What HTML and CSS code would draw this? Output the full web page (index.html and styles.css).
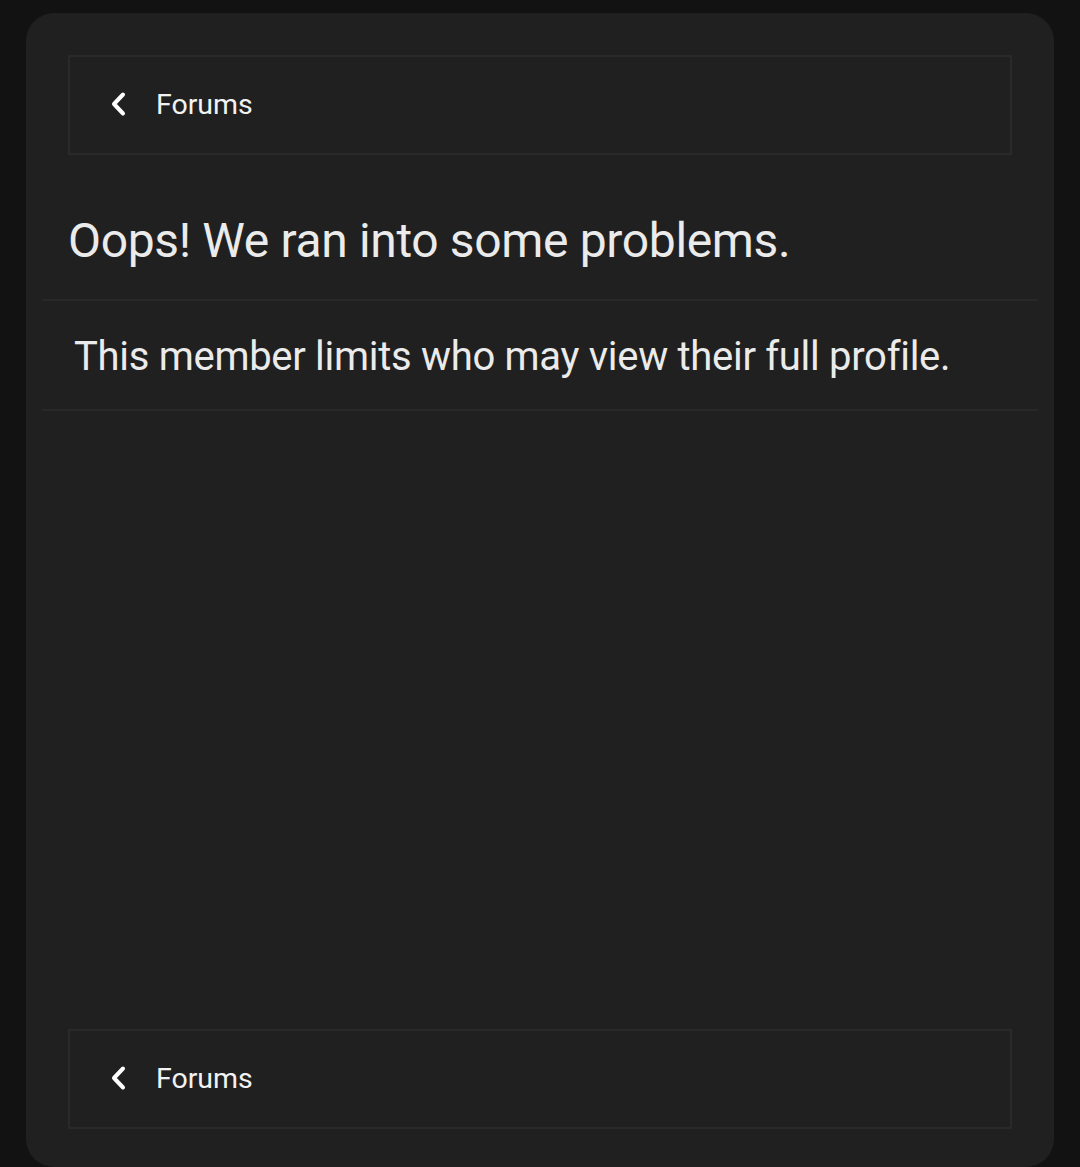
FILE: index.html
```html
<!DOCTYPE html>
<html lang="en">
<head>
<meta charset="utf-8">
<title>Oops! We ran into some problems.</title>
<link rel="stylesheet" href="styles.css">
</head>
<body>
<div class="card">
  <nav class="crumb">
    <svg class="chev" width="16" height="26" viewBox="0 0 16 26"><polyline points="13,3.5 4,13 13,22.5" fill="none" stroke="#ffffff" stroke-width="4" stroke-linecap="round" stroke-linejoin="round"/></svg>
    <span class="crumb-text">Forums</span>
  </nav>
  <h1 class="title">Oops! We ran into some problems.</h1>
  <div class="block">
    <p class="msg">This member limits who may view their full profile.</p>
  </div>
  <div class="spacer"></div>
  <nav class="crumb">
    <svg class="chev" width="16" height="26" viewBox="0 0 16 26"><polyline points="13,3.5 4,13 13,22.5" fill="none" stroke="#ffffff" stroke-width="4" stroke-linecap="round" stroke-linejoin="round"/></svg>
    <span class="crumb-text">Forums</span>
  </nav>
</div>
</body>
</html>
```

FILE: styles.css
```css
html, body {
  margin: 0;
  padding: 0;
  background: #121212;
}
body {
  padding: 13px 26px 0 26px;
  font-family: Roboto, "Liberation Sans", sans-serif;
  color: #eeeeee;
}
.card {
  background: #202020;
  border-radius: 28px;
  height: 1154px;
  box-sizing: border-box;
  padding: 42px 16px 38px 16px;
  display: flex;
  flex-direction: column;
}
.crumb {
  margin: 0 26px;
  height: 100px;
  box-sizing: border-box;
  border: 2px solid #2a2a2a;
  display: flex;
  align-items: center;
  padding-left: 40px;
}
.chev {
  display: block;
  margin-right: 30px;
  margin-top: -2px;
}
.crumb-text {
  font-size: 28.5px;
  color: #f2f2f2;
  position: relative;
  top: -1px;
}
.title {
  margin: 0;
  padding: 58px 0 30px 26px;
  font-size: 48px;
  letter-spacing: -0.35px;
  font-weight: 400;
  line-height: 56px;
  color: #ebebeb;
  border-bottom: 2px solid #282828;
}
.block {
  border-bottom: 2px solid #282828;
  padding: 28px 0 24px 32px;
}
.msg {
  margin: 0;
  font-size: 40px;
  letter-spacing: -0.3px;
  line-height: 56px;
  color: #ebebeb;
}
.spacer {
  flex: 1;
}
```
